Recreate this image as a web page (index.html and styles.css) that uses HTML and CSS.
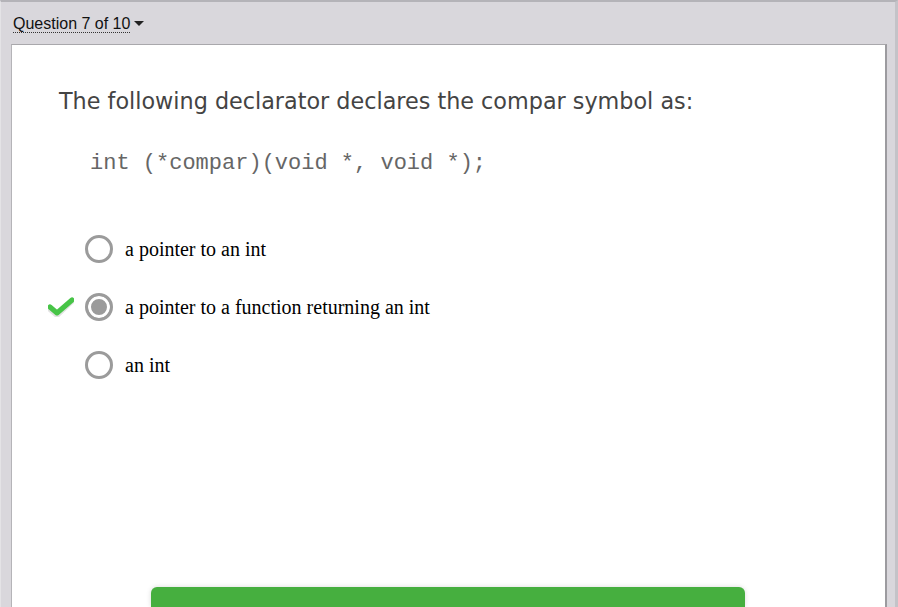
FILE: index.html
```html
<!DOCTYPE html>
<html>
<head>
<meta charset="utf-8">
<link rel="stylesheet" href="styles.css">
</head>
<body>
<div class="frame">
  <div class="topbar">
    <span class="qnav">Question 7 of 10</span><span class="caret"></span>
  </div>
  <div class="card">
    <h1 class="question">The following declarator declares the compar symbol as:</h1>
    <pre class="code">int (*compar)(void *, void *);</pre>
    <ul class="options">
      <li class="option">
        <span class="mark"></span>
        <span class="radio"></span>
        <span class="label">a pointer to an int</span>
      </li>
      <li class="option">
        <span class="mark">
          <svg width="26" height="20" viewBox="0 0 26 20">
            <path d="M2 11 L9 17 L24 3" fill="none" stroke="#e2e2e2" stroke-width="5" stroke-linecap="round" stroke-linejoin="round" transform="translate(0,1.5)"/>
            <path d="M2 10 L9 16 L24 3" fill="none" stroke="#47c447" stroke-width="5" stroke-linecap="round" stroke-linejoin="round"/>
          </svg>
        </span>
        <span class="radio checked"></span>
        <span class="label">a pointer to a function returning an int</span>
      </li>
      <li class="option">
        <span class="mark"></span>
        <span class="radio"></span>
        <span class="label">an int</span>
      </li>
    </ul>
    <div class="actions">
      <div class="submit"></div>
    </div>
  </div>
</div>
</body>
</html>
```
FILE: styles.css
```css
html, body {
  margin: 0;
  padding: 0;
  height: 100%;
  overflow: hidden;
  background: #ffffff;
}
.frame {
  box-sizing: border-box;
  width: 898px;
  height: 607px;
  background: #d9d7dc;
  border-top: 2px solid #b4b3b8;
  border-left: 1px solid #e4e3e6;
  border-right: 3px solid #c4c3c8;
  padding: 0 8px 0 10px;
  display: flex;
  flex-direction: column;
}
.topbar {
  height: 42px;
  display: flex;
  align-items: flex-start;
  padding-top: 13px;
  box-sizing: border-box;
  padding-left: 2px;
  font-family: "Liberation Sans", Arial, sans-serif;
  font-size: 16px;
  color: #111;
}
.qnav {
  border-bottom: 1px dotted #333;
  line-height: 17px;
}
.caret {
  display: inline-block;
  width: 0;
  height: 0;
  margin-left: 4px;
  margin-top: 6px;
  border-left: 5px solid transparent;
  border-right: 5px solid transparent;
  border-top: 5px solid #222;
}
.card {
  flex: 1;
  background: #fff;
  border-top: 1px solid #a9a8ac;
  border-left: 1px solid #b5b4b8;
  border-right: 2px solid #9c9b9f;
  box-sizing: border-box;
  display: flex;
  flex-direction: column;
  padding-left: 47px;
}
.question {
  margin: 42px 0 0 0;
  font-family: "DejaVu Sans", Verdana, sans-serif;
  font-weight: normal;
  font-size: 22.3px;
  line-height: 28px;
  color: #444;
}
.code {
  margin: 37px 0 0 31px;
  font-family: "Liberation Mono", "Courier New", monospace;
  font-size: 22px;
  line-height: 24px;
  color: #666;
}
.options {
  list-style: none;
  margin: 59px 0 0 0;
  padding: 0;
  display: flex;
  flex-direction: column;
  gap: 30px;
}
.option {
  display: flex;
  align-items: center;
  height: 28px;
  margin-left: -11px;
}
.mark {
  width: 26px;
  height: 20px;
  margin-right: 11px;
  display: flex;
}
.radio {
  box-sizing: border-box;
  width: 28px;
  height: 28px;
  border-radius: 50%;
  border: 3px solid #9b9b9b;
  background: #fff;
  margin-right: 12px;
}
.radio.checked {
  background: #9b9b9b;
  box-shadow: inset 0 0 0 3px #fff;
}
.label {
  font-family: "Liberation Serif", "Times New Roman", serif;
  font-size: 20px;
  color: #000;
}
.actions {
  margin-top: auto;
  padding-left: 92px;
}
.submit {
  width: 594px;
  height: 20px;
  background: #46af3f;
  border-radius: 6px 6px 0 0;
  box-shadow: 0 0 5px rgba(0,0,0,0.15);
}
```
